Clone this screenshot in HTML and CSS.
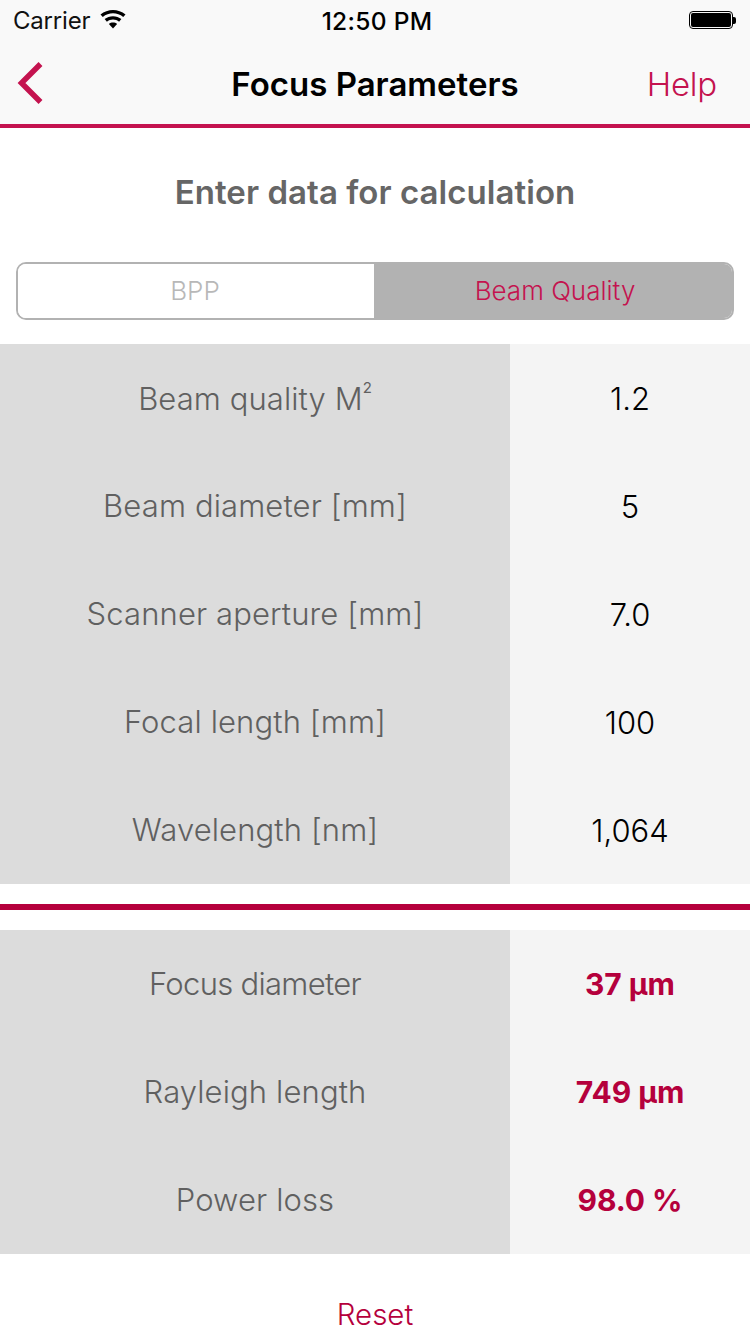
FILE: index.html
```
<!DOCTYPE html>
<html lang="en">
<head>
<meta charset="utf-8">
<title>Focus Parameters</title>
<link rel="stylesheet" href="styles.css">
</head>
<body>
<header class="top">
  <div class="status">
    <div class="status-left">
      <span>Carrier</span>
      <svg class="wifi" viewBox="0 0 26 19" width="26" height="19"><path d="M13 18.5 L8.9 13.9 C11.2 12 14.8 12 17.1 13.9 Z"/><path d="M6.9 11.7 L4.6 9.1 C9.2 5.2 16.8 5.2 21.4 9.1 L19.1 11.7 C15.7 8.8 10.3 8.8 6.9 11.7 Z"/><path d="M2.8 7.1 L.5 4.5 C7.6 -1.5 18.4 -1.5 25.5 4.5 L23.2 7.1 C17.3 2.1 8.7 2.1 2.8 7.1 Z"/></svg>
    </div>
    <div class="time">12:50 PM</div>
    <div class="battery"><span class="battery-body"><span class="battery-fill"></span></span><span class="battery-cap"></span></div>
  </div>
  <nav class="nav">
    <svg class="back" viewBox="0 0 28 44" width="28" height="44"><path d="M24.5 3 L5.5 22 L24.5 41" fill="none" stroke="#c4134f" stroke-width="5.5"/></svg>
    <h1 class="title">Focus Parameters</h1>
    <span class="help">Help</span>
  </nav>
</header>
<main>
  <h2 class="heading">Enter data for calculation</h2>
  <div class="segment">
    <div class="seg seg-off">BPP</div>
    <div class="seg seg-on">Beam Quality</div>
  </div>
  <section class="table">
    <div class="row"><div class="label label-first">Beam quality M<sup class="sup">2</sup></div><div class="value">1.2</div></div>
    <div class="row"><div class="label">Beam diameter [mm]</div><div class="value">5</div></div>
    <div class="row"><div class="label">Scanner aperture [mm]</div><div class="value">7.0</div></div>
    <div class="row"><div class="label">Focal length [mm]</div><div class="value">100</div></div>
    <div class="row"><div class="label">Wavelength [nm]</div><div class="value">1,064</div></div>
  </section>
  <div class="divider"></div>
  <section class="table">
    <div class="row"><div class="label label-tight">Focus diameter</div><div class="value result">37 µm</div></div>
    <div class="row"><div class="label">Rayleigh length</div><div class="value result">749 µm</div></div>
    <div class="row"><div class="label">Power loss</div><div class="value result">98.0 %</div></div>
  </section>
  <div class="reset">Reset</div>
</main>
</body>
</html>
```
FILE: styles.css
```
html, body { margin: 0; padding: 0; }
body {
  width: 750px;
  height: 1334px;
  overflow: hidden;
  background: #fff;
  font-family: Inter, "Liberation Sans", sans-serif;
  color: #000;
}
.top { background: #f9f9f9; border-bottom: 4px solid #c4134f; }
.status {
  height: 40px;
  display: grid;
  grid-template-columns: 1fr auto 1fr;
  align-items: center;
  padding: 1px 14px 0 13px;
  box-sizing: border-box;
  font-size: 24px;
}
.status-left { display: flex; align-items: center; gap: 10px; letter-spacing: -.2px; color: #111; }
.wifi { fill: #000; margin-top: -2px; }
.time { font-weight: 500; font-size: 24.5px; letter-spacing: .3px; margin-left: 5px; }
.battery { justify-self: end; display: flex; align-items: center; margin-top: -1px; }
.battery-body {
  display: block;
  width: 44px;
  height: 18px;
  box-sizing: border-box;
  border: 1px solid #000;
  border-radius: 4px;
  padding: 1px;
}
.battery-fill { display: block; height: 100%; background: #000; border-radius: 2px; }
.battery-cap { display: block; width: 3px; height: 7px; background: #000; border-radius: 0 2px 2px 0; }
.nav {
  height: 84px;
  box-sizing: border-box;
  padding: 3px 16px 0;
  display: grid;
  grid-template-columns: 1fr auto 1fr;
  align-items: center;
}
.back { display: block; margin-top: -1px; }
.title { margin: 0; font-size: 33px; font-weight: 600; }
.help { justify-self: end; margin-right: 17px; color: #c4134f; font-size: 33px; font-weight: 300; letter-spacing: -.2px; }
.heading {
  margin: 0;
  height: 134px;
  line-height: 128px;
  text-align: center;
  font-size: 33px;
  font-weight: 600;
  color: #666;
  letter-spacing: .05px;
}
.segment {
  margin: 0 16px 24px;
  height: 58px;
  box-sizing: border-box;
  display: grid;
  grid-template-columns: 356px 1fr;
  border: 2px solid #b2b2b2;
  border-radius: 10px;
  overflow: hidden;
  font-size: 26px;
  font-weight: 300;
}
.seg { display: flex; align-items: center; justify-content: center; padding-bottom: 2px; }
.seg-off { color: #b8b8b8; background: #fff; padding-right: 2px; }
.seg-on { color: #c4134f; background: #b2b2b2; padding-left: 4px; }
.table { display: flex; flex-direction: column; }
.row {
  height: 108px;
  display: grid;
  grid-template-columns: 510px 1fr;
}
.label, .value { display: flex; align-items: center; justify-content: center; font-size: 31px; font-weight: 300; }
.label { background: #dcdcdc; color: #606060; white-space: pre; letter-spacing: .12px; padding-bottom: 1px; }
.label-first { padding-bottom: 0; letter-spacing: .08px; }
.label-tight { letter-spacing: -.7px; }
.value { background: #f4f4f4; color: #000; }
.sup { font-size: 15px; font-weight: 400; line-height: 1; align-self: center; margin-top: -22px; letter-spacing: 0; }
.result { color: #b5003c; font-weight: 700; font-size: 30px; letter-spacing: -.05px; }
.divider { height: 6px; margin: 20px 0; background: #b5003c; }
.reset { height: 80px; line-height: 121px; text-align: center; color: #b5003c; font-size: 29.5px; font-weight: 300; }
```
